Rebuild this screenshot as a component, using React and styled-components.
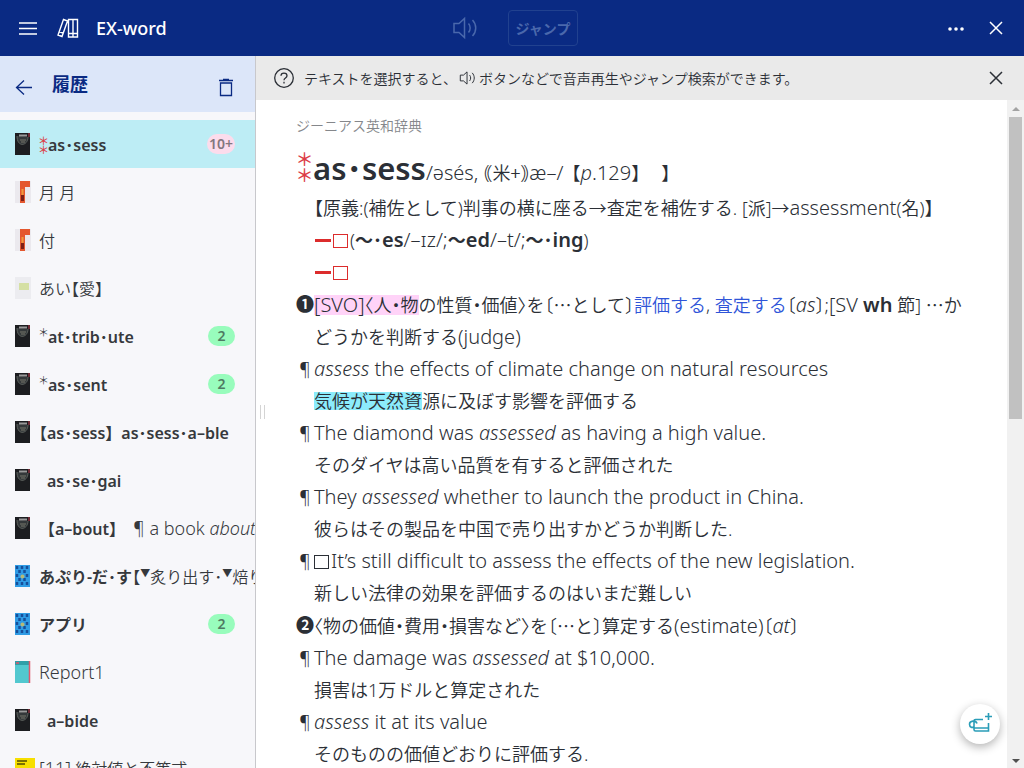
import React from "react";
import styled, { createGlobalStyle } from "styled-components";

const App = () => {
  return (
    <Page>
      <GlobalStyle />
      <TopBar>
        <TopGroup>
          <IconButton aria-label="Menu">
            <svg width="24" height="24" stroke="currentColor" strokeWidth="1.5">
              <path d="M3 7h18M3 12.500h18M3 18h18" />
            </svg>
          </IconButton>
          <LibraryIcon />
          <AppName>EX-word</AppName>
        </TopGroup>
        <TopGroup $dim>
          <IconButton aria-label="Sound" disabled>
            <SpeakerIcon size={28} />
          </IconButton>
          <JumpButton disabled>ジャンプ</JumpButton>
        </TopGroup>
        <TopGroup $end>
          <IconButton aria-label="More">
            <svg width="24" height="24" fill="currentColor">
              <circle cx="6" cy="13" r="1.800" />
              <circle cx="12" cy="13" r="1.800" />
              <circle cx="18" cy="13" r="1.800" />
            </svg>
          </IconButton>
          <IconButton aria-label="Close">
            <CrossIcon />
          </IconButton>
        </TopGroup>
      </TopBar>

      <Columns>
        <Sidebar>
          <SideHeader>
            <IconButton aria-label="Back">
              <svg width="24" height="24" fill="none" stroke="currentColor" strokeWidth="1.3">
                <path d="M20 12.500H5M12 5.500l-7.500 7 7.500 7" />
              </svg>
            </IconButton>
            <SideTitle>履歴</SideTitle>
            <IconButton aria-label="Delete">
              <svg width="24" height="24" fill="none" stroke="currentColor" strokeWidth="1.3">
                <path d="M5 5.500h14M9 4.500h6M6.500 8h11v12.500h-11z" />
              </svg>
            </IconButton>
          </SideHeader>
          <EntryList>
            {entries.map((entry, i) => (
              <li key={i}>
                <Entry href="#entry" $selected={entry.selected}>
                  <BookCover kind={entry.book} />
                  {entry.stars && <StarStack />}
                  <EntryText $indent={entry.indent}>{entry.text}</EntryText>
                  {entry.count && (
                    <Count $hot={entry.selected}>{entry.count}</Count>
                  )}
                </Entry>
              </li>
            ))}
          </EntryList>
        </Sidebar>

        <Main>
          <HintBar>
            <svg width="24" height="24" fill="none" stroke="currentColor" strokeWidth="1.3">
              <circle cx="12" cy="12" r="9.300" />
              <path d="M9 9.800c0-3.600 6-3.600 6 0 0 2.200-3 2.200-3 4.400M12 15.800v1.600" />
            </svg>
            <HintText>
              テキストを選択すると、
              <SpeakerIcon size={18} />
              ボタンなどで音声再生やジャンプ検索ができます。
            </HintText>
            <IconButton aria-label="Close hint">
              <CrossIcon />
            </IconButton>
          </HintBar>
          <Reader>
            <Article>
              <DictName>ジーニアス英和辞典</DictName>
              <HeadRow>
                <StarStack large />
                <Headword>as･sess</Headword>
                <span>
                  <English>/əsés, </English>
                  <Cjk>｟米+｠</Cjk>
                  <English>æ–/ </English>&thinsp;【<English><i>p</i>.129</English>】&emsp;&thinsp;】
                </span>
              </HeadRow>
              <Line>
                【原義:(補佐として)判事の横に座る→査定を補佐する. [派]→<English>assessment</English>(名)】
              </Line>
              <Line>
                <PartOfSpeech />(<b>〜･<English>es</English></b>
                <English>/–ɪz/;</English>
                <b>〜<English>ed</English></b>
                <English>/–t/;</English>
                <b>〜･<English>ing</English></b>)
              </Line>
              <Line>
                <PartOfSpeech />
              </Line>
              <Row>
                <Marker $bold>❶</Marker>
                <span>
                  <Mark $color="#ffd3f8"><English>[SVO]</English>〈人・物</Mark>
                  の性質・価値〉を〔<Cjk>…</Cjk>として〕<Blue>評価する</Blue>, <Blue>査定する</Blue>
                  〔<English><i>as</i></English>〕;<English>[SV <b>wh</b></English> 節]{" "}
                  <Cjk>…</Cjk>かどうかを判断する<English>(judge)</English>
                </span>
              </Row>
              <Example
                en={<><i>assess</i> the effects of climate change on natural resources</>}
                ja={<><Mark $color="#8cecfc">気候が天然資</Mark>源に及ぼす影響を評価する</>}
              />
              <Example
                en={<>The diamond was <i>assessed</i> as having a high value.</>}
                ja="そのダイヤは高い品質を有すると評価された"
              />
              <Example
                en={<>They <i>assessed</i> whether to launch the product in China.</>}
                ja="彼らはその製品を中国で売り出すかどうか判断した."
              />
              <Example
                en={<><Box />It’s still difficult to assess the effects of the new legislation.</>}
                ja="新しい法律の効果を評価するのはいまだ難しい"
              />
              <Row>
                <Marker $bold>❷</Marker>
                <span>
                  〈物の価値・費用・損害など〉を〔<Cjk>…</Cjk>と〕算定する
                  <English>(estimate)</English>〔<English><i>at</i></English>〕
                </span>
              </Row>
              <Example
                en={<>The damage was <i>assessed</i> at $10,000.</>}
                ja="損害は1万ドルと算定された"
              />
              <Example
                en={<><i>assess</i> it at its value</>}
                ja="そのものの価値どおりに評価する."
              />
            </Article>
            <ScrollRail>
              <Arrow $up />
              <Thumb />
              <Arrow />
            </ScrollRail>
          </Reader>
          <Splitter />
          <AddButton aria-label="Add card">
            <CardIcon />
          </AddButton>
        </Main>
      </Columns>
    </Page>
  );
};

export default App;

const Example = ({ en, ja }) => (
  <Row>
    <Marker>¶</Marker>
    <span>
      <English>{en}</English>
      <br />
      {ja}
    </span>
  </Row>
);

const PartOfSpeech = () => (
  <Pos>
    <Dash />
    <Box />
  </Pos>
);

const StarStack = ({ large }) => (
  <Stars $large={large}>
    <span>＊</span>
    <span>＊</span>
  </Stars>
);

const CrossIcon = () => (
  <svg width="24" height="24" stroke="currentColor" strokeWidth="1.5">
    <path d="M6 6l12 12M18 6L6 18" />
  </svg>
);

const SpeakerIcon = ({ size }) => (
  <svg width={size} height={size} viewBox="0 0 28 28" fill="none" stroke="currentColor" strokeWidth="1.5">
    <path d="M2 9.500h5l5.500-5v19l-5.500-5H2zM16.500 9.500c2.200 2.500 2.200 6.500 0 9M20.500 6c4.300 4.500 4.300 11.500 0 16" />
  </svg>
);

const LibraryIcon = () => (
  <svg width="24" height="24" fill="none" stroke="currentColor" strokeWidth="1.4">
    <path d="M12.500 3.500h4.500v17.500h-4.500zM17 3.500h4.500v17.500H17zM12.500 17.500h9M7.500 3.500l4 1.500-5.500 15.500-4-1.500zM3 15.500l4 1.500" />
  </svg>
);

const CardIcon = () => (
  <svg width="28" height="28" fill="none" stroke="#2a9db8" strokeWidth="1.6">
    <path d="M17 9.500H9.500q-1.500 0-1.500 1.500v8.500q0 1.500 1.500 1.500H22.500V13M8 18h14.500M11 13.500c-1-3.500-7.500-3-7.500.8 0 3 3 4 4.500 2.200M22.500 3v7M19 6.500h7" />
  </svg>
);

const BookCover = ({ kind }) => (
  <Cover width="16" height="22" viewBox="0 0 16 22">
    {kind === "genius" && (
      <>
        <rect width="15" height="22" fill="#1c1d20" />
        <path d="M2 3c0 12 11 10 11 1" fill="#34383a" stroke="#5b605c" />
        <path d="M4 2.500h8" stroke="#9a9a9a" strokeWidth="2" />
        <path d="M5 7h6M6 9h4" stroke="#77766a" />
        <path d="M14 0v4" stroke="#c33b4c" />
      </>
    )}
    {kind === "kanji" && (
      <>
        <rect width="16" height="22" fill="#ebe9ee" />
        <path d="M5 0h10v6h-5v16H5z" fill="#e4572e" />
        <path d="M7.500 8v6" stroke="#f09a3c" strokeWidth="2" />
        <path d="M7.500 14v6" stroke="#7c2018" strokeWidth="3" />
      </>
    )}
    {kind === "classic" && (
      <>
        <rect width="16" height="22" fill="#ececf0" />
        <rect x="4" y="6" width="10" height="7" fill="#d5e0a4" />
      </>
    )}
    {kind === "meikyo" && (
      <>
        <rect width="15" height="22" fill="#2f9be4" />
        <path
          d="M2 1v3M7 1v3M12 1v3M4.500 5v3M9.500 5v3M2 9v3M12 9v3M4.500 13v3M9.500 13v3M2 17v3M7 17v3M12 17v3"
          stroke="#174f9a"
          strokeWidth="2.500"
        />
        <circle cx="7.500" cy="11.500" r="2" fill="#b5b877" />
      </>
    )}
    {kind === "note" && (
      <>
        <rect width="15" height="22" fill="#52c8cf" />
        <rect width="15" height="4" fill="#2f9fa8" />
        <path d="M14.500 0v22M1 2h3" stroke="#e0566a" strokeWidth="1.500" />
      </>
    )}
    {kind === "math" && (
      <>
        <path d="M0 1h20v21H0z" fill="#f7df00" />
        <path d="M2 4h10M2 7h8" stroke="#7a7000" strokeWidth="2" />
      </>
    )}
  </Cover>
);

const GlobalStyle = createGlobalStyle`
  * {
    box-sizing: border-box;
  }

  body {
    margin: 0;
    font-family: "Noto Sans", "Noto Sans CJK JP", sans-serif;
    font-weight: 350;
    color: #2b2f36;
  }

  b {
    font-weight: 600;
  }

  svg {
    flex-shrink: 0;
  }
`;

const Page = styled.div`
  display: flex;
  flex-direction: column;
  height: 100vh;
  overflow: hidden;
`;

const TopBar = styled.header`
  display: grid;
  grid-template-columns: 1fr auto 1fr;
  align-items: center;
  height: 56px;
  flex-shrink: 0;
  padding: 0 16px;
  background: #0a2a83;
  color: #fff;
`;

const TopGroup = styled.div`
  display: flex;
  align-items: center;
  gap: ${(props) => (props.$dim ? "28px" : "16px")};
  padding-left: ${(props) => (props.$dim ? "6px" : "0")};
  justify-content: ${(props) => (props.$end ? "flex-end" : "flex-start")};
  color: ${(props) => (props.$dim ? "#4a68ac" : "inherit")};
`;

const IconButton = styled.button`
  display: flex;
  padding: 0;
  border: 0;
  background: none;
  color: inherit;
  cursor: pointer;
`;

const AppName = styled.span`
  font-size: 18px;
  font-weight: 500;
`;

const JumpButton = styled.button`
  height: 36px;
  padding: 0 7px;
  border: 1px solid #21418f;
  border-radius: 4px;
  background: none;
  color: #4a68ac;
  font-family: "Noto Sans CJK JP", sans-serif;
  font-size: 14px;
  font-weight: 700;
`;

const Columns = styled.div`
  display: flex;
  flex: 1;
  min-height: 0;
`;

const Sidebar = styled.aside`
  width: 25%;
  min-width: 256px;
  border-right: 1px solid #c8c8cc;
  background: #f7f7fa;
  overflow: hidden;
`;

const SideHeader = styled.div`
  display: flex;
  align-items: center;
  height: 56px;
  padding: 6px 17px 0 12px;
  background: #dce6f9;
  color: #0a2a83;
`;

const SideTitle = styled.h2`
  flex: 1;
  margin: 0 0 6px 16px;
  font-size: 18px;
  line-height: 24px;
  font-weight: 700;
`;

const EntryList = styled.ul`
  margin: 8px 0 0;
  padding: 0;
  list-style: none;
`;

const Entry = styled.a`
  display: flex;
  align-items: center;
  height: 48px;
  padding-left: 15px;
  background: ${(props) => (props.$selected ? "#bdedf5" : "none")};
  color: #36393d;
  text-decoration: none;
`;

const Cover = styled.svg`
  margin-right: 8px;
  overflow: visible;
`;

const EntryText = styled.span`
  flex: 1;
  padding-top: 2px;
  padding-left: ${(props) => (props.$indent ? "8px" : "0")};
  font-size: 16px;
  line-height: 24px;
  font-feature-settings: "halt";
  white-space: nowrap;
  overflow: hidden;
`;

const Star = styled.span`
  display: inline-block;
  width: 9px;
  text-indent: -1px;
  font-size: 11px;
  line-height: 11px;
  vertical-align: 6px;
`;

const Raised = styled.sup`
  font-size: 10px;
  line-height: 1;
`;

const Stars = styled.span`
  display: flex;
  flex-direction: column;
  align-items: center;
  align-self: ${(props) => (props.$large ? "flex-start" : "auto")};
  width: ${(props) => (props.$large ? "17px" : "9px")};
  padding-top: 2px;
  color: #dc3c46;
  font-family: "Noto Sans CJK JP", sans-serif;
  font-size: ${(props) => (props.$large ? "18px" : "11px")};
  font-weight: 500;
  line-height: ${(props) => (props.$large ? "16px" : "9px")};
`;

const Count = styled.span`
  min-width: 27px;
  margin-right: 20px;
  padding: 0 2px;
  border-radius: 10px;
  background: ${(props) => (props.$hot ? "#fcdcec" : "#98fcbc")};
  color: ${(props) => (props.$hot ? "#84767f" : "#4f7a63")};
  font-size: 14px;
  line-height: 20px;
  font-weight: 600;
  text-align: center;
`;

const Main = styled.main`
  position: relative;
  display: flex;
  flex-direction: column;
  flex: 1;
  min-width: 0;
  background: #fff;
`;

const HintBar = styled.div`
  display: flex;
  align-items: center;
  height: 44px;
  flex-shrink: 0;
  padding: 0 16px;
  background: #eaeaea;
`;

const HintText = styled.p`
  display: flex;
  align-items: center;
  flex: 1;
  gap: 2px;
  margin: 0 0 0 8px;
  font-size: 14px;
`;

const Reader = styled.div`
  display: flex;
  flex: 1;
  min-height: 0;
`;

const Article = styled.article`
  flex: 1;
  padding: 16px 36px 0 40px;
  font-size: 18px;
  line-height: 32px;
  font-feature-settings: "halt";
  overflow: hidden;
`;

const DictName = styled.div`
  color: #85878b;
  font-size: 14px;
  line-height: 20px;
`;

const HeadRow = styled.div`
  display: flex;
  align-items: baseline;
  height: 44px;
  margin-top: 12px;
`;

const Headword = styled.h1`
  margin: 0;
  font-size: 31px;
  line-height: 40px;
  font-weight: 600;
`;

const Line = styled.div`
  padding-left: 18px;
`;

const Row = styled.div`
  display: grid;
  grid-template-columns: 18px 1fr;
`;

const Marker = styled.span`
  font-weight: ${(props) => (props.$bold ? 700 : "inherit")};
  text-align: center;
`;

const English = styled.span`
  font-size: 20px;
  line-height: 20px;
`;

const SideEnglish = styled.span`
  font-size: 18px;
  line-height: 18px;
`;

const Cjk = styled.span`
  font-family: "Noto Sans CJK JP", sans-serif;
`;

const Mark = styled.mark`
  display: inline-block;
  background: ${(props) => props.$color};
  color: inherit;
  line-height: 18px;
`;

const Blue = styled.span`
  color: #2f55d8;
`;

const Pos = styled.span`
  color: #dc2c2c;
`;

const Dash = styled.span`
  display: inline-block;
  width: 16px;
  height: 3px;
  margin: 0 2px 5px 1px;
  background: currentColor;
`;

const Box = styled.span`
  display: inline-block;
  width: 15px;
  height: 14px;
  margin-right: 2px;
  border: 1px solid currentColor;
  vertical-align: -1px;
`;

const ScrollRail = styled.div`
  display: flex;
  flex-direction: column;
  align-items: center;
  width: 17px;
  padding: 7px 0 5px;
  background: #f1f1f1;
`;

const Arrow = styled.div`
  border: 4px solid transparent;
  border-top-width: ${(props) => (props.$up ? "0" : "4px")};
  border-bottom-width: ${(props) => (props.$up ? "4px" : "0")};
  border-top-color: #505050;
  border-bottom-color: #a3a3a3;
  margin-top: ${(props) => (props.$up ? "0" : "auto")};
`;

const Thumb = styled.div`
  width: 13px;
  height: 46%;
  margin-top: 6px;
  background: #c1c1c1;
`;

const Splitter = styled.div`
  position: absolute;
  top: 50%;
  left: 4px;
  width: 5px;
  height: 14px;
  margin-top: -7px;
  border: solid #d4d4d4;
  border-width: 0 1px;
`;

const AddButton = styled.button`
  position: absolute;
  right: 24px;
  bottom: 24px;
  display: flex;
  align-items: center;
  justify-content: center;
  width: 40px;
  height: 40px;
  padding: 0;
  border: 0;
  border-radius: 50%;
  background: #fff;
  box-shadow: 0 3px 10px rgba(0, 0, 0, 0.3);
`;

const entries = [
  { book: "genius", stars: true, text: <b>as･sess</b>, count: "10+", selected: true },
  { book: "kanji", text: "月 月" },
  { book: "kanji", text: "付" },
  { book: "classic", text: "あい【愛】" },
  { book: "genius", text: <><Star>＊</Star><b>at･trib･ute</b></>, count: "2" },
  { book: "genius", text: <><Star>＊</Star><b>as･sent</b></>, count: "2" },
  { book: "genius", text: <b>【as･sess】&ensp;as･sess･a–ble</b> },
  { book: "genius", indent: true, text: <b>as･se･gai</b> },
  {
    book: "genius",
    indent: true,
    text: <><b>【a–bout】</b>　<SideEnglish>¶ a book <i>about</i></SideEnglish></>,
  },
  { book: "meikyo", text: <><b>あぷり-だ･す</b>【<Raised>▼</Raised>炙り出す･<Raised>▼</Raised>焙り出す】</> },
  { book: "meikyo", text: <b>アプリ</b>, count: "2" },
  { book: "note", text: <SideEnglish>Report1</SideEnglish> },
  { book: "genius", indent: true, text: <b>a–bide</b> },
  { book: "math", text: <><SideEnglish>[11]</SideEnglish> 絶対値と不等式 ¬</> },
];
